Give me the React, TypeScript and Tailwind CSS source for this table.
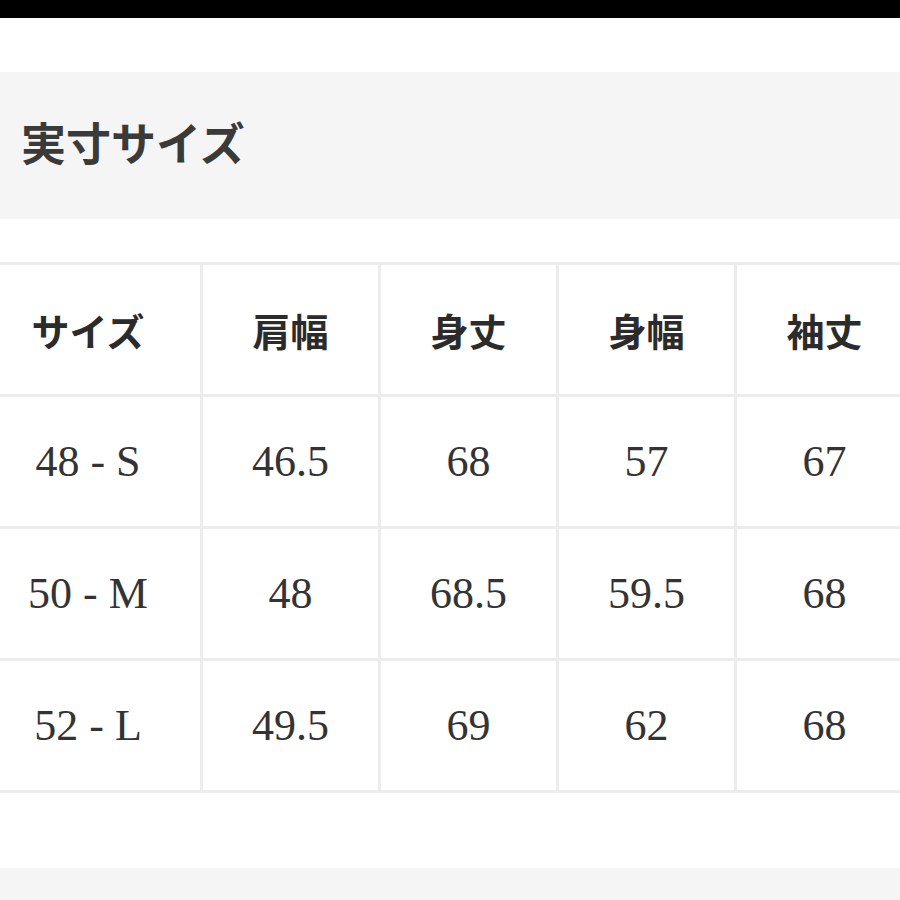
const headers = ['サイズ', '肩幅', '身丈', '身幅', '袖丈']

const rows = [
  ['48 - S', '46.5', '68', '57', '67'],
  ['50 - M', '48', '68.5', '59.5', '68'],
  ['52 - L', '49.5', '69', '62', '68'],
]

const App = () => {
  return (
    <div className='w-[900px] h-[900px] bg-white flex flex-col overflow-hidden'>
      <div className='h-[18px] bg-black shrink-0' />

      <div className='mt-[54px] h-[147px] bg-[#f5f5f5] flex items-center pl-[21px] pb-[8px] shrink-0'>
        <h2 className='text-[45px] font-bold text-[#3a3a3a] leading-none font-["Noto_Sans_CJK_JP",sans-serif]'>
          実寸サイズ
        </h2>
      </div>

      <div className='mt-[43px] overflow-hidden shrink-0'>
        <div className='-ml-[24px] w-[939px] grid grid-cols-[224px_175px_175px_175px_175px] auto-rows-[129px] gap-[3px] py-[3px] bg-[#ececec]'>
          {headers.map((h) => (
            <div
              key={h}
              className='bg-white flex items-center justify-center text-[38px] font-bold text-[#2b2b2b] font-["Noto_Sans_CJK_JP",serif]'
            >
              {h}
            </div>
          ))}
          {rows.map((row, i) =>
            row.map((cell, j) => (
              <div
                key={`${i}-${j}`}
                className='bg-white flex items-center justify-center text-[44px] text-[#333] font-["Liberation_Serif",serif]'
              >
                {cell}
              </div>
            ))
          )}
        </div>
      </div>

      <div className='flex-1' />
      <div className='h-[32px] bg-[#f5f5f5] shrink-0' />
    </div>
  )
}

export default App
